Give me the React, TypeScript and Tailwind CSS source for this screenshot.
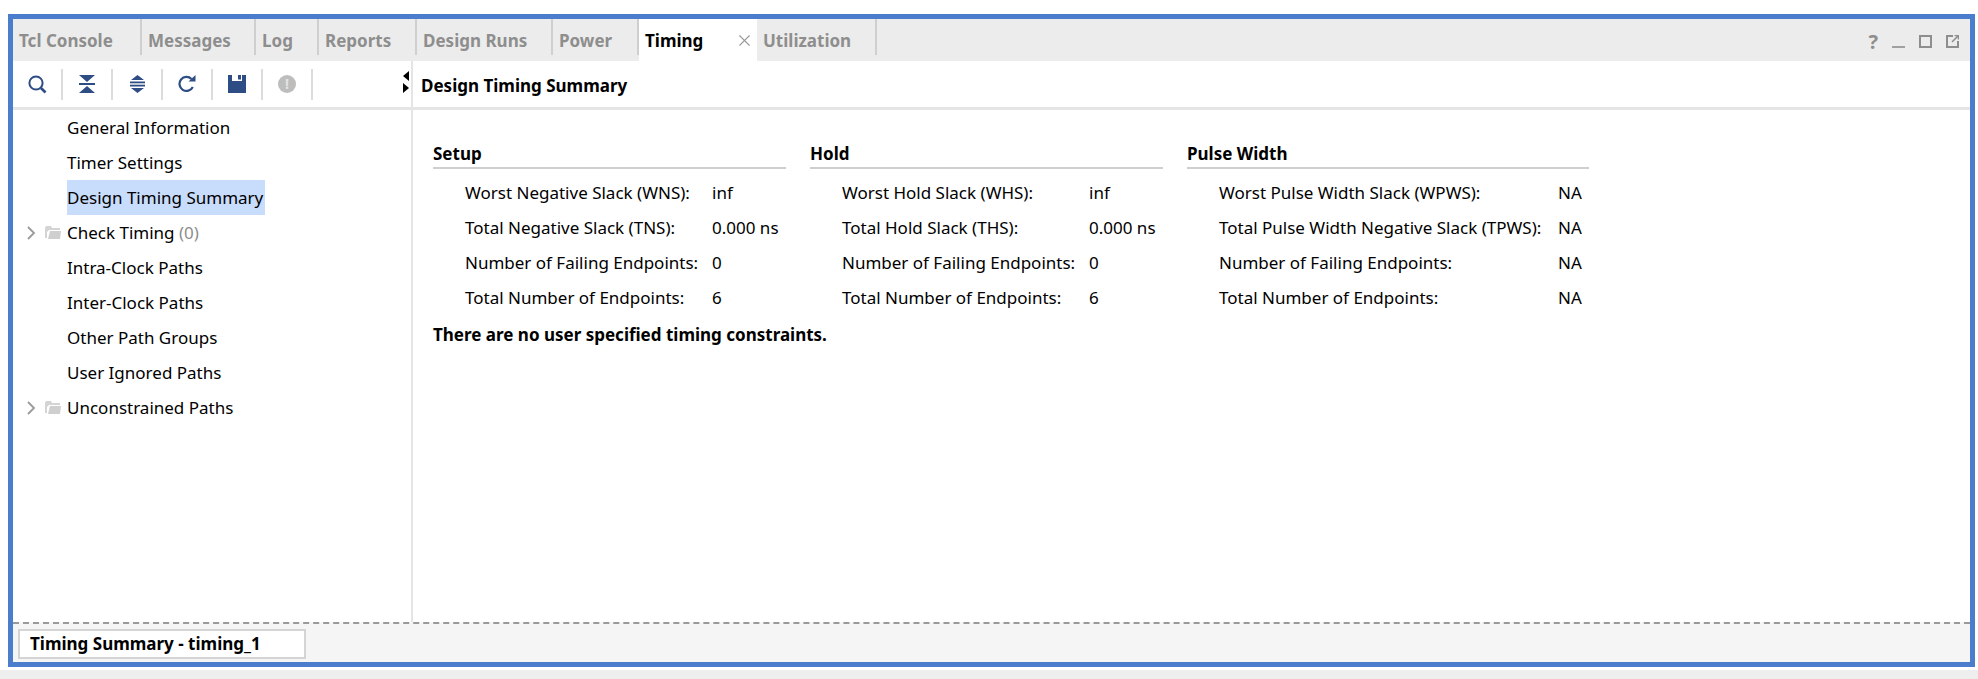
import { X } from "lucide-react";
import type { ReactNode } from "react";

const tabs = [
  { label: "Tcl Console", w: "w-[129px]" },
  { label: "Messages", w: "w-[114px]" },
  { label: "Log", w: "w-[63px]" },
  { label: "Reports", w: "w-[98px]" },
  { label: "Design Runs", w: "w-[136px]" },
  { label: "Power", w: "w-[86px]" },
];

const treeItems = [
  { label: "General Information" },
  { label: "Timer Settings" },
  { label: "Design Timing Summary", selected: true },
  { label: "Check Timing", count: "(0)", folder: true },
  { label: "Intra-Clock Paths" },
  { label: "Inter-Clock Paths" },
  { label: "Other Path Groups" },
  { label: "User Ignored Paths" },
  { label: "Unconstrained Paths", folder: true },
];

const columns = [
  {
    title: "Setup",
    w: "w-[353px]",
    gap: "mr-[24px]",
    labelW: "w-[247px]",
    rows: [
      ["Worst Negative Slack (WNS):", "inf"],
      ["Total Negative Slack (TNS):", "0.000 ns"],
      ["Number of Failing Endpoints:", "0"],
      ["Total Number of Endpoints:", "6"],
    ],
  },
  {
    title: "Hold",
    w: "w-[353px]",
    gap: "mr-[24px]",
    labelW: "w-[247px]",
    rows: [
      ["Worst Hold Slack (WHS):", "inf"],
      ["Total Hold Slack (THS):", "0.000 ns"],
      ["Number of Failing Endpoints:", "0"],
      ["Total Number of Endpoints:", "6"],
    ],
  },
  {
    title: "Pulse Width",
    w: "w-[402px]",
    gap: "",
    labelW: "w-[339px]",
    rows: [
      ["Worst Pulse Width Slack (WPWS):", "NA"],
      ["Total Pulse Width Negative Slack (TPWS):", "NA"],
      ["Number of Failing Endpoints:", "NA"],
      ["Total Number of Endpoints:", "NA"],
    ],
  },
];

const ToolCell = ({ children }: { children: ReactNode }) => (
  <div className="w-[50px] h-[31px] shrink-0 flex items-center justify-center border-r-2 border-[#dcdcdc]">
    {children}
  </div>
);

const FolderIcon = () => (
  <svg width="16" height="13" viewBox="0 0 16 13">
    <path d="M0 2 L1 0 H6 L7 2 H15 V4 H4 L2 6 V12 H0 Z" fill="#d4d4d4" />
    <path d="M3 13 L5 5 H16 L15 13 Z" fill="#cfcfcf" />
  </svg>
);

const Chevron = () => (
  <svg width="10" height="14" viewBox="0 0 10 14" className="mr-[9px]">
    <path d="M2 1 L8 7 L2 13" fill="none" stroke="#9a9a9a" strokeWidth="1.8" />
  </svg>
);

export default function App() {
  return (
    <div className="w-[1978px] h-[679px] bg-white overflow-hidden flex flex-col text-[17px] text-black font-['Noto_Sans',sans-serif]">
      <div className="h-[14px] shrink-0" />
      <div className="ml-[8px] w-[1967px] h-[653px] shrink-0 border-[5px] border-[#4a7dcb] flex flex-col">
        {/* Tab bar */}
        <div className="h-[42px] shrink-0 bg-[#ececec] flex items-stretch">
          {tabs.map((t) => (
            <div key={t.label} className={`${t.w} h-[36px] pl-[6px] flex items-center border-r-2 border-[#cfcfcf] font-bold text-[#8e8e8e] whitespace-nowrap`}>
              <span className="pt-[7px]">{t.label}</span>
            </div>
          ))}
          <div className="w-[118px] bg-white flex items-center pl-[6px] font-bold">
            <span className="w-[90px] pt-[1px]">Timing</span>
            <X className="w-[19px] h-[19px] text-[#9a9a9a]" strokeWidth={1.4} />
          </div>
          <div className="w-[120px] h-[36px] pl-[6px] border-r-2 border-[#cfcfcf] flex items-center font-bold text-[#8e8e8e]">
            <span className="pt-[7px]">Utilization</span>
          </div>
          <div className="flex-1 flex items-center justify-end pr-[11px] gap-[14px] pt-[3px]">
            <span className="font-bold text-[#8e8e8e] text-[20px] leading-none">?</span>
            <div className="w-[13px] h-[2px] bg-[#a0a0a0] mt-[10px]" />
            <div className="w-[13px] h-[13px] border-2 border-[#8e8e8e]" />
            <svg width="13" height="13" viewBox="0 0 13 13">
              <path d="M7 1 H1 V12 H12 V6" fill="none" stroke="#8e8e8e" strokeWidth="2" />
              <path d="M6 7 L12 1 M8.5 0.5 H12.5 V4.5" fill="none" stroke="#8e8e8e" strokeWidth="1.5" />
            </svg>
          </div>
        </div>

        {/* Body */}
        <div className="flex-1 flex min-h-0">
          {/* Left panel */}
          <div className="w-[400px] shrink-0 border-r-2 border-[#e5e5e5] flex flex-col">
            <div className="h-[49px] shrink-0 border-b-[3px] border-[#e5e5e5] flex items-center relative">
              <ToolCell>
                <svg width="19" height="19" viewBox="0 0 19 19">
                  <circle cx="8" cy="8" r="6.6" fill="none" stroke="#2f4d85" strokeWidth="2" />
                  <path d="M13 13 L17.5 17.5" stroke="#2f4d85" strokeWidth="2.6" />
                </svg>
              </ToolCell>
              <ToolCell>
                <svg width="16" height="18" viewBox="0 0 16 18">
                  <path d="M0 0 H16 L8 7 Z M0 18 H16 L8 11 Z" fill="#2f4d85" />
                  <rect x="0" y="8" width="16" height="2" fill="#2f4d85" />
                </svg>
              </ToolCell>
              <ToolCell>
                <svg width="15" height="18" viewBox="0 0 15 18">
                  <path d="M7.5 0 L14 5 H1 Z M7.5 18 L14 13 H1 Z" fill="#2f4d85" />
                  <rect x="0" y="6.5" width="15" height="1.8" fill="#2f4d85" />
                  <rect x="0" y="9.7" width="15" height="1.8" fill="#2f4d85" />
                </svg>
              </ToolCell>
              <ToolCell>
                <svg width="18" height="18" viewBox="0 0 18 18">
                  <path d="M14.8 12 A7 7 0 1 1 13.5 4" fill="none" stroke="#2f4d85" strokeWidth="2.2" />
                  <path d="M10.5 6.5 H17.5 V0 Z" fill="#2f4d85" />
                </svg>
              </ToolCell>
              <ToolCell>
                <svg width="18" height="18" viewBox="0 0 18 18">
                  <path d="M0 0 H4 V6 H14 V0 H18 V18 H0 Z" fill="#2f4d85" />
                  <rect x="10" y="0" width="3" height="4.5" fill="#2f4d85" />
                </svg>
              </ToolCell>
              <ToolCell>
                <div className="w-[18px] h-[18px] rounded-full bg-[#bdbdbd] flex items-center justify-center text-[#e4e4e4] text-[14px] font-bold leading-none">!</div>
              </ToolCell>
              <div className="absolute right-[2px] top-[10px] flex flex-col gap-[2px]">
                <div className="w-0 h-0 border-y-[5px] border-y-transparent border-r-[6px] border-r-black" />
                <div className="w-0 h-0 border-y-[5px] border-y-transparent border-l-[6px] border-l-black" />
              </div>
            </div>
            <div>
              {treeItems.map((item) => (
                <div key={item.label} className="h-[35px] flex items-center">
                  <div className="w-[54px] pl-[13px] shrink-0 flex items-center">
                    {item.folder && <Chevron />}
                    {item.folder && <FolderIcon />}
                  </div>
                  <span className={`h-[35px] leading-[35px] whitespace-nowrap ${item.selected ? "bg-[#c8dcfb] w-[198px]" : ""}`}>
                    {item.label}
                    {item.count && <span className="text-[#8e8e8e]"> {item.count}</span>}
                  </span>
                </div>
              ))}
            </div>
          </div>

          {/* Right panel */}
          <div className="flex-1 flex flex-col min-w-0">
            <div className="h-[49px] shrink-0 border-b-[3px] border-[#e5e5e5] flex items-center pl-[8px] pt-[4px] font-bold">
              Design Timing Summary
            </div>
            <div className="pl-[20px] pt-[30px]">
              <div className="flex">
                {columns.map((c) => (
                  <div key={c.title} className={`${c.w} ${c.gap} shrink-0`}>
                    <div className="h-[29px] border-b-2 border-[#cfcfcf] font-bold leading-[28px]">{c.title}</div>
                    <div className="pt-[6px]">
                      {c.rows.map(([k, v]) => (
                        <div key={k} className="h-[35px] flex items-center pl-[32px] whitespace-nowrap">
                          <span className={`${c.labelW} shrink-0`}>{k}</span>
                          <span>{v}</span>
                        </div>
                      ))}
                    </div>
                  </div>
                ))}
              </div>
              <div className="font-bold mt-[2px] h-[35px] leading-[35px]">There are no user specified timing constraints.</div>
            </div>
          </div>
        </div>

        {/* Footer tabs */}
        <div className="h-[40px] shrink-0 bg-[#f5f5f5] border-t-2 border-dashed border-[#9a9a9a] pt-[5px] pl-[5px]">
          <div className="w-[288px] h-[30px] bg-white border-2 border-[#d4d4d4] pl-[10px] font-bold leading-[26px]">
            Timing Summary - timing_1
          </div>
        </div>
      </div>
      <div className="h-[3px] shrink-0" />
      <div className="flex-1 bg-[#eeeeee]" />
    </div>
  );
}
